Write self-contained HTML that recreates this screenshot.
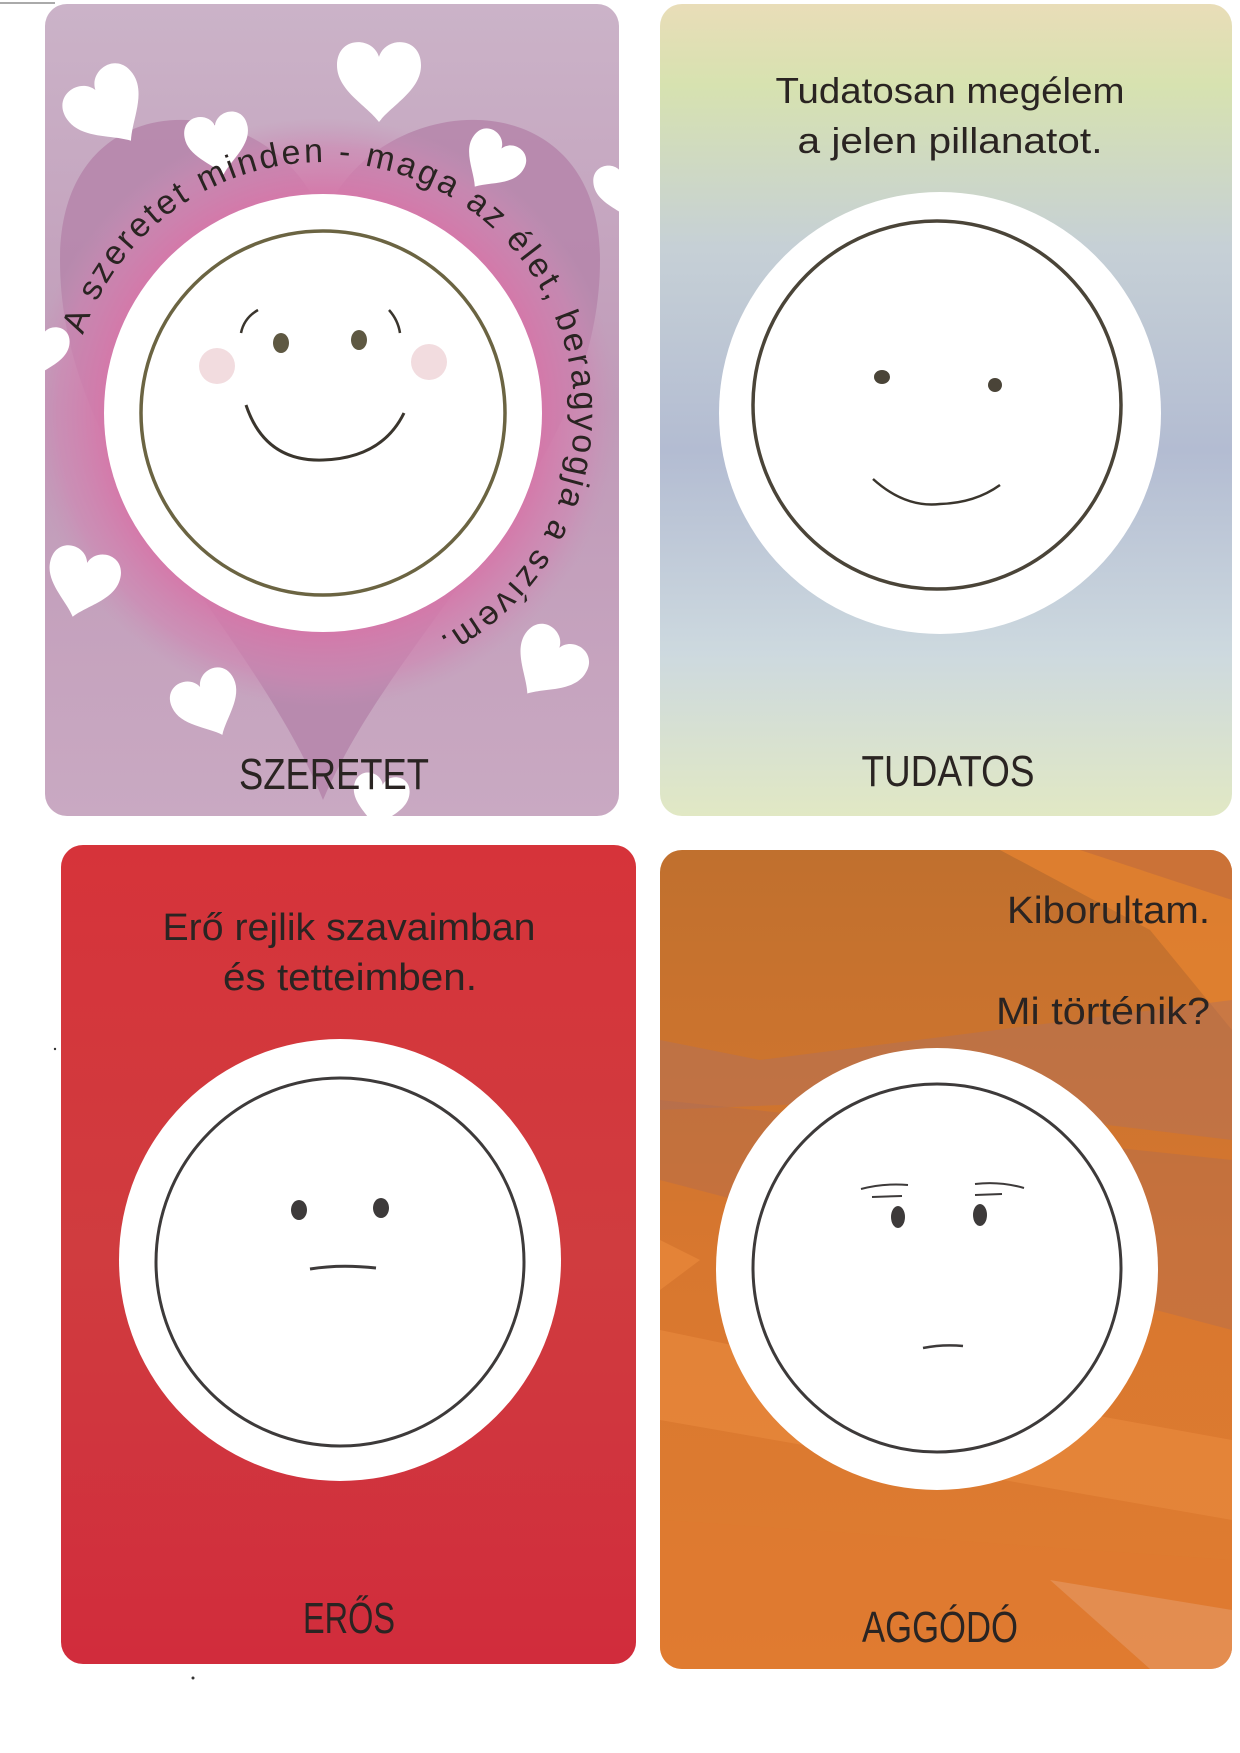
<!DOCTYPE html>
<html><head><meta charset="utf-8"><style>
html,body{margin:0;padding:0;background:#fff;}
svg{display:block}
text{font-family:"Liberation Sans","DejaVu Sans",sans-serif;fill:#2a2422;}
</style></head><body>
<svg width="1240" height="1753" viewBox="0 0 1240 1753" xmlns="http://www.w3.org/2000/svg">
<defs>
<path id="ht" d="M0,-0.55 C-0.15,-1.05 -1,-1.05 -1,-0.35 C-1,0.25 -0.3,0.6 0,1 C0.3,0.6 1,0.25 1,-0.35 C1,-1.05 0.15,-1.05 0,-0.55Z"/>
<linearGradient id="g1" x1="0" y1="0" x2="0" y2="1"><stop offset="0" stop-color="#cbb3c8"/><stop offset="0.5" stop-color="#c09ab8"/><stop offset="1" stop-color="#c9a9c2"/></linearGradient>
<radialGradient id="pk" cx="0.5" cy="0.5" r="0.5"><stop offset="0.72" stop-color="#d676a8"/><stop offset="0.9" stop-color="#cf86b2" stop-opacity="0.6"/><stop offset="1" stop-color="#c891b6" stop-opacity="0"/></radialGradient>
<linearGradient id="g2" x1="0" y1="0" x2="0" y2="1"><stop offset="0" stop-color="#e9ddb8"/><stop offset="0.1" stop-color="#d7e2b0"/><stop offset="0.3" stop-color="#c6d0d6"/><stop offset="0.55" stop-color="#b3bcd2"/><stop offset="0.8" stop-color="#cdd9df"/><stop offset="1" stop-color="#e1e8c4"/></linearGradient>
<linearGradient id="g3" x1="0" y1="0" x2="0" y2="1"><stop offset="0" stop-color="#d6333a"/><stop offset="0.5" stop-color="#d03c3f"/><stop offset="1" stop-color="#d12c3c"/></linearGradient>
<linearGradient id="g4" x1="0" y1="0" x2="0" y2="1"><stop offset="0" stop-color="#c0702e"/><stop offset="0.5" stop-color="#d8772f"/><stop offset="1" stop-color="#e07d30"/></linearGradient>
<clipPath id="c1"><rect x="45" y="4" width="574" height="812" rx="22"/></clipPath>
<clipPath id="c4"><rect x="660" y="850" width="572" height="819" rx="22"/></clipPath>
</defs>

<line x1="0" y1="3" x2="55" y2="3" stroke="#555" stroke-width="1"/>

<!-- Card 1 -->
<g clip-path="url(#c1)">
<rect x="45" y="4" width="574" height="812" fill="url(#g1)"/>
<path d="M323,220 C280,90 60,70 60,260 C60,470 250,620 323,800 C400,620 600,470 600,260 C600,70 370,90 323,220Z" fill="#b585aa" opacity="0.85"/>
<circle cx="323" cy="413" r="295" fill="url(#pk)"/>
<g fill="#fff">
<use href="#ht" transform="translate(379,80) scale(42)"/>
<use href="#ht" transform="translate(108,108) rotate(-35) scale(40)"/>
<use href="#ht" transform="translate(218,143) rotate(-10) scale(32)"/>
<use href="#ht" transform="translate(492,162) rotate(35) scale(30)"/>
<use href="#ht" transform="translate(82,582) rotate(15) scale(36)"/>
<use href="#ht" transform="translate(208,704) rotate(-25) scale(34)"/>
<use href="#ht" transform="translate(548,664) rotate(35) scale(36)"/>
<use href="#ht" transform="translate(625,190) rotate(-10) scale(30)"/>
<use href="#ht" transform="translate(40,350) rotate(10) scale(28)"/>
<use href="#ht" transform="translate(380,800) rotate(10) scale(28)"/>
</g>
</g>
<circle cx="323" cy="413" r="219" fill="#fff"/>
<circle cx="323" cy="413" r="182" fill="none" stroke="#6b6442" stroke-width="3.5"/>
<circle cx="217" cy="366" r="18" fill="#f2dcdf"/>
<circle cx="429" cy="362" r="18" fill="#f2dcdf"/>
<ellipse cx="281" cy="343" rx="8" ry="10" fill="#5e5842"/>
<ellipse cx="359" cy="340" rx="8" ry="10" fill="#5e5842"/>
<path d="M241,333 Q244,318 258,310" fill="none" stroke="#3a352d" stroke-width="2.5"/>
<path d="M389,310 Q398,320 400,333" fill="none" stroke="#3a352d" stroke-width="2.5"/>
<path d="M246,405 Q265,462 323,460 Q382,458 404,413" fill="none" stroke="#3a352d" stroke-width="3"/>
<path id="arc1" d="M83,335 A252,252 0 1 1 434,640" fill="none"/>
<text font-size="34"><textPath href="#arc1" textLength="985" lengthAdjust="spacing">A szeretet minden - maga az élet, beragyogja a szívem.</textPath></text>
<text x="334" y="789" font-size="44" text-anchor="middle" textLength="190" lengthAdjust="spacingAndGlyphs">SZERETET</text>

<!-- Card 2 -->
<rect x="660" y="4" width="572" height="812" rx="22" fill="url(#g2)"/>
<circle cx="940" cy="413" r="221" fill="#fff"/>
<circle cx="937" cy="405" r="184" fill="none" stroke="#4a4438" stroke-width="3.5"/>
<ellipse cx="882" cy="377" rx="8" ry="7" fill="#4a4438"/>
<ellipse cx="995" cy="385" rx="7" ry="7" fill="#4a4438"/>
<path d="M873,479 Q905,508 940,504 Q975,503 1000,485" fill="none" stroke="#3a352d" stroke-width="2.5"/>
<text x="950" y="103" font-size="36" text-anchor="middle" textLength="349" lengthAdjust="spacingAndGlyphs">Tudatosan megélem</text>
<text x="950" y="153" font-size="36" text-anchor="middle" textLength="305" lengthAdjust="spacingAndGlyphs">a jelen pillanatot.</text>
<text x="948" y="786" font-size="44" text-anchor="middle" textLength="173" lengthAdjust="spacingAndGlyphs">TUDATOS</text>

<!-- Card 3 -->
<rect x="61" y="845" width="575" height="819" rx="22" fill="url(#g3)"/>
<circle cx="340" cy="1260" r="221" fill="#fff"/>
<circle cx="340" cy="1262" r="184" fill="none" stroke="#3d3a3a" stroke-width="3"/>
<ellipse cx="299" cy="1210" rx="8" ry="10" fill="#3d3a3a"/>
<ellipse cx="381" cy="1208" rx="8" ry="10" fill="#3d3a3a"/>
<path d="M310,1269 Q340,1264 376,1268" fill="none" stroke="#3d3a3a" stroke-width="3"/>
<text x="349" y="940" font-size="38" text-anchor="middle" textLength="373" lengthAdjust="spacingAndGlyphs">Erő rejlik szavaimban</text>
<text x="350" y="990" font-size="38" text-anchor="middle" textLength="254" lengthAdjust="spacingAndGlyphs">és tetteimben.</text>
<text x="349" y="1633" font-size="44" text-anchor="middle" textLength="92" lengthAdjust="spacingAndGlyphs">ERŐS</text>
<circle cx="55" cy="1049" r="1.2" fill="#333"/>
<circle cx="193" cy="1678" r="1.5" fill="#333"/>

<!-- Card 4 -->
<g clip-path="url(#c4)">
<rect x="660" y="850" width="572" height="819" fill="url(#g4)"/>
<polygon points="1000,850 1232,850 1232,1030 1150,930" fill="#e4822f" opacity="0.8"/>
<polygon points="1080,850 1232,850 1232,900" fill="#c36e3a" opacity="0.7"/>
<polygon points="660,1040 760,1060 1232,1000 1232,1140 900,1100 660,1110" fill="#b07060" opacity="0.45"/>
<polygon points="660,1100 1232,1160 1232,1330 660,1180" fill="#a86a5a" opacity="0.35"/>
<polygon points="660,1330 900,1380 1232,1440 1232,1520 660,1420" fill="#ea8a40" opacity="0.6"/>
<polygon points="660,1520 1232,1560 1232,1669 660,1669" fill="#e07a30" opacity="0.6"/>
<polygon points="1050,1580 1232,1610 1232,1669 1150,1669" fill="#e8a070" opacity="0.5"/>
<polygon points="660,1240 700,1260 660,1290" fill="#f09040" opacity="0.5"/>
</g>
<circle cx="937" cy="1269" r="221" fill="#fff"/>
<circle cx="937" cy="1268" r="184" fill="none" stroke="#3d3a3a" stroke-width="3"/>
<ellipse cx="898" cy="1217" rx="7" ry="11" fill="#3d3a3a"/>
<ellipse cx="980" cy="1215" rx="7" ry="11" fill="#3d3a3a"/>
<path d="M861,1189 Q884,1183 908,1185 M872,1197 L902,1196" fill="none" stroke="#3d3a3a" stroke-width="2"/>
<path d="M975,1184 Q1000,1181 1024,1188 M975,1195 L1002,1194" fill="none" stroke="#3d3a3a" stroke-width="2"/>
<path d="M923,1348 Q943,1344 963,1346" fill="none" stroke="#3d3a3a" stroke-width="2.5"/>
<text x="1210" y="923" font-size="38" text-anchor="end" textLength="203" lengthAdjust="spacingAndGlyphs">Kiborultam.</text>
<text x="1210" y="1024" font-size="38" text-anchor="end" textLength="214" lengthAdjust="spacingAndGlyphs">Mi történik?</text>
<text x="940" y="1642" font-size="44" text-anchor="middle" textLength="156" lengthAdjust="spacingAndGlyphs">AGGÓDÓ</text>
</svg>
</body></html>
